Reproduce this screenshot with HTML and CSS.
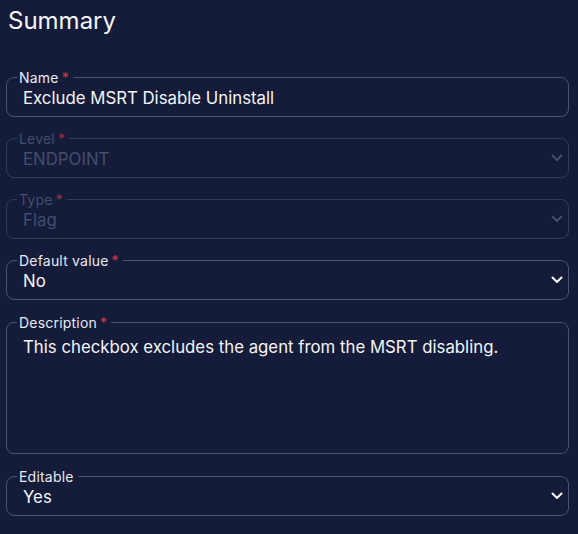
FILE: index.html
```html
<!DOCTYPE html>
<html>
<head>
<meta charset="utf-8">
<link rel="stylesheet" href="styles.css">
</head>
<body>
<div class="panel">
  <h1 class="title">Summary</h1>

  <fieldset class="field">
    <legend class="label">Name<span class="req">*</span></legend>
    <div class="row"><span class="value">Exclude MSRT Disable Uninstall</span></div>
  </fieldset>

  <fieldset class="field disabled">
    <legend class="label">Level<span class="req">*</span></legend>
    <div class="row"><span class="value">ENDPOINT</span>
      <svg class="chev" width="12" height="8" viewBox="0 0 12 8"><path d="M1.5 1.5 L6 6 L10.5 1.5" fill="none" stroke="currentColor" stroke-width="2" stroke-linecap="round" stroke-linejoin="round"/></svg>
    </div>
  </fieldset>

  <fieldset class="field disabled">
    <legend class="label">Type<span class="req">*</span></legend>
    <div class="row"><span class="value">Flag</span>
      <svg class="chev" width="12" height="8" viewBox="0 0 12 8"><path d="M1.5 1.5 L6 6 L10.5 1.5" fill="none" stroke="currentColor" stroke-width="2" stroke-linecap="round" stroke-linejoin="round"/></svg>
    </div>
  </fieldset>

  <fieldset class="field">
    <legend class="label">Default value<span class="req">*</span></legend>
    <div class="row"><span class="value">No</span>
      <svg class="chev" width="12" height="8" viewBox="0 0 12 8"><path d="M1.5 1.5 L6 6 L10.5 1.5" fill="none" stroke="currentColor" stroke-width="2" stroke-linecap="round" stroke-linejoin="round"/></svg>
    </div>
  </fieldset>

  <fieldset class="field area">
    <legend class="label">Description<span class="req">*</span></legend>
    <div class="text">This checkbox excludes the agent from the MSRT disabling.</div>
  </fieldset>

  <fieldset class="field">
    <legend class="label">Editable</legend>
    <div class="row"><span class="value">Yes</span>
      <svg class="chev" width="12" height="8" viewBox="0 0 12 8"><path d="M1.5 1.5 L6 6 L10.5 1.5" fill="none" stroke="currentColor" stroke-width="2" stroke-linecap="round" stroke-linejoin="round"/></svg>
    </div>
  </fieldset>
</div>
</body>
</html>
```

FILE: styles.css
```css
html, body {
  margin: 0;
  padding: 0;
  background: #141c3a;
}
body {
  font-family: Inter, "Noto Sans", sans-serif;
  color: #eef0f5;
  width: 578px;
  height: 534px;
  overflow: hidden;
}
.panel {
  padding: 0 9px 0 6px;
}
.title {
  margin: 0;
  padding: 6px 0 0 2px;
  font-size: 24px;
  line-height: 30px;
  font-weight: 400;
  color: #f4f5f8;
  margin-bottom: 32.5px;
}
.field {
  margin: 0 0 13.3px 0;
  padding: 0 5px 0 16px;
  border: 1px solid #4a5272;
  border-radius: 8px;
  min-width: 0;
}
.label {
  margin-left: -6px;
  padding: 0 4px 0 2px;
  font-size: 14px;
  line-height: 17px;
  letter-spacing: 0.2px;
  color: #e6e9f0;
}
.req {
  color: #e2323f;
  margin-left: 3px;
}
.row {
  display: flex;
  align-items: center;
  justify-content: space-between;
  padding: 2px 0 8px;
  height: 20px;
}
.value {
  font-size: 16.8px;
  line-height: 20px;
  color: #f4f5f8;
}
.chev {
  color: #ffffff;
  margin-top: -2px;
}
.disabled {
  border-color: #333b5b;
}
.disabled .label,
.disabled .value,
.disabled .chev {
  color: #444d6d;
}
.disabled .req {
  color: #a52a3c;
}
.area {
  margin-bottom: 14.5px;
}
.text {
  font-size: 16.8px;
  line-height: 20px;
  padding: 6px 0 0;
  height: 116px;
  color: #f4f5f8;
}
```
